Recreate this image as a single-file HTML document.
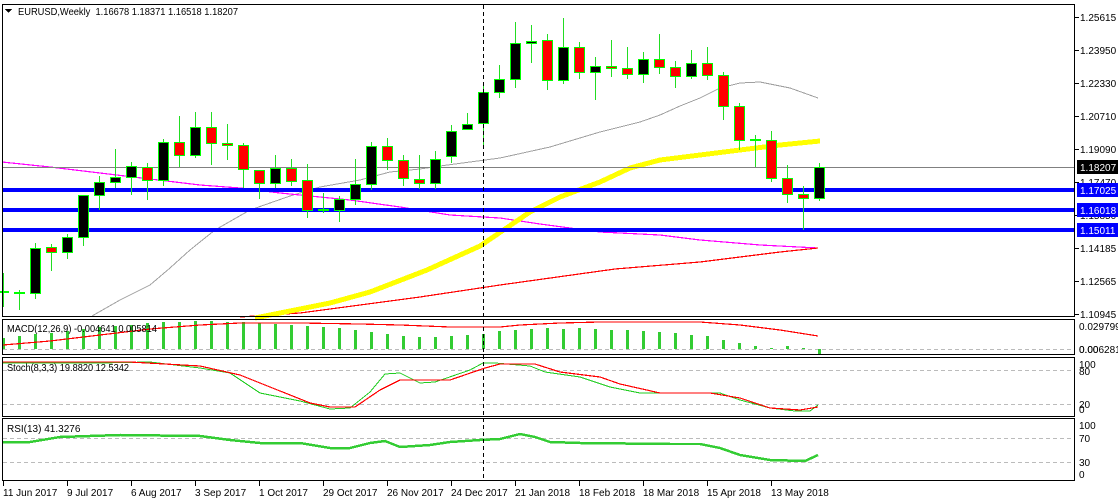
<!DOCTYPE html>
<html><head><meta charset="utf-8"><style>
html,body{margin:0;padding:0;background:#fff;width:1118px;height:502px;overflow:hidden}
svg{display:block}
text{font-family:"Liberation Sans",sans-serif;font-size:10px;fill:#000}
</style></head><body>
<svg id="s" width="1118" height="502" viewBox="0 0 1118 502" xmlns="http://www.w3.org/2000/svg" shape-rendering="crispEdges">
<rect width="1118" height="502" fill="#fff"/>
<g id="g"></g>
<g fill="none" stroke="#000" stroke-width="1">
<rect x="2.5" y="4.5" width="1072" height="312"/>
<rect x="2.5" y="319.5" width="1072" height="35"/>
<rect x="2.5" y="357.5" width="1072" height="59"/>
<rect x="2.5" y="418.5" width="1072" height="62"/>
</g>
<line x1="483.5" y1="5" x2="483.5" y2="481" stroke="#000" stroke-dasharray="4,3"/>
<path d="M5 9 L12 9 L8.5 13 Z" fill="#000"/>
<text x="18" y="15" textLength="220" lengthAdjust="spacingAndGlyphs">EURUSD,Weekly&#160; 1.16678 1.18371 1.16518 1.18207</text>
<text x="7" y="332" textLength="150" lengthAdjust="spacingAndGlyphs">MACD(12,26,9) -0.004641 0.005814</text>
<text x="7" y="371" textLength="122" lengthAdjust="spacingAndGlyphs">Stoch(8,3,3) 19.8820 12.5342</text>
<text x="7" y="432">RSI(13) 41.3276</text>
<g>
<text x="1080" y="21">1.25615</text>
<text x="1080" y="54">1.23950</text>
<text x="1080" y="87">1.22330</text>
<text x="1080" y="120">1.20710</text>
<text x="1080" y="153">1.19090</text>
<text x="1080" y="186">1.17470</text>
<text x="1080" y="219">1.15850</text>
<text x="1080" y="252">1.14185</text>
<text x="1080" y="285">1.12565</text>
<text x="1080" y="318">1.10945</text>
<rect x="1077" y="160" width="41" height="14" fill="#000"/>
<text x="1080" y="171" style="fill:#fff">1.18207</text>
<rect x="1077" y="183" width="41" height="14" fill="#0000ff"/>
<text x="1080" y="194" style="fill:#fff">1.17025</text>
<rect x="1077" y="203" width="41" height="14" fill="#0000ff"/>
<text x="1080" y="214" style="fill:#fff">1.16018</text>
<rect x="1077" y="223" width="41" height="14" fill="#0000ff"/>
<text x="1080" y="234" style="fill:#fff">1.15011</text>
<text x="1079" y="330">0.029799</text>
<text x="1079" y="353">0.006281</text>
<text x="1079" y="353">0.00</text>
<text x="1079" y="368">100</text>
<text x="1079" y="375">80</text>
<text x="1079" y="408">20</text>
<text x="1079" y="413">0</text>
<text x="1079" y="429">100</text>
<text x="1079" y="442">70</text>
<text x="1079" y="466">30</text>
<text x="1079" y="478">0</text>
</g>
<g>
<text x="3" y="496">11 Jun 2017</text>
<text x="67" y="496">9 Jul 2017</text>
<text x="131" y="496">6 Aug 2017</text>
<text x="195" y="496">3 Sep 2017</text>
<text x="259" y="496">1 Oct 2017</text>
<text x="323" y="496">29 Oct 2017</text>
<text x="387" y="496">26 Nov 2017</text>
<text x="451" y="496">24 Dec 2017</text>
<text x="515" y="496">21 Jan 2018</text>
<text x="579" y="496">18 Feb 2018</text>
<text x="643" y="496">18 Mar 2018</text>
<text x="707" y="496">15 Apr 2018</text>
<text x="771" y="496">13 May 2018</text>
</g>
</svg>
<script>
var NS="http://www.w3.org/2000/svg",g=document.getElementById("g");
function el(t,a){var e=document.createElementNS(NS,t);for(var k in a)e.setAttribute(k,a[k]);g.appendChild(e);return e;}
function pl(pts,c,w,extra){var a={points:pts.map(function(p){return p.join(",")}).join(" "),fill:"none",stroke:c,"stroke-width":w};for(var k in extra)a[k]=extra[k];el("polyline",a);}
for(var y of [17,50,83,116,149,182,215,248,281,314])el("line",{x1:1075,x2:1079,y1:y+.5,y2:y+.5,stroke:"#000"});
for(var i=0;i<13;i++)el("line",{x1:3.5+64*i,x2:3.5+64*i,y1:481,y2:486,stroke:"#000"});
for(var y of [349,370,404,438,462])el("line",{x1:3,x2:1074,y1:y+.5,y2:y+.5,stroke:"#bbb","stroke-dasharray":"4,3"});
pl([[92,316],[120,300],[150,285],[170,268],[190,250],[215,230],[250,210],[290,196],[320,187],[360,180],[390,172],[420,169],[440,166],[470,162],[500,158],[550,147],[600,132],[640,122],[660,115],[680,106],[700,98],[720,88],[740,83],[760,82],[790,88],[818,98]],"#a0a0a0",1);
pl([[2,162],[50,167],[100,173],[150,179],[200,185],[240,188],[280,193],[350,200],[400,207],[450,215],[500,218],[540,224],[600,232],[660,235],[700,240],[760,245],[818,248]],"#ff00ff",1.2);
pl([[240,317],[300,313],[360,305],[420,297],[500,285],[615,269],[700,262],[780,252],[818,248]],"#ff0000",1.2);
pl([[255,318],[300,309],[330,303],[370,292],[427,270],[480,246],[530,212],[560,197],[600,182],[630,168],[660,160],[700,155],[740,150],[780,145],[820,141]],"#ffff00",5);
el("line",{x1:3,x2:1074,y1:167.5,y2:167.5,stroke:"#808080"});
for(var y of [190,210,230])el("rect",{x:3,y:y-2,width:1071,height:4,fill:"#0000ff"});
var C=[[292,292,273,307,2],[293,293,290,310,2],[248,293,243,299,0],[247,252,244,271,1],[237,252,234,259,0],[195,237,195,246,0],[182,195,176,210,0],[177,182,149,188,0],[166,177,162,195,0],[167,180,163,200,1],[142,180,139,186,0],[142,155,116,167,1],[127,155,112,158,0],[127,143,112,165,1],[143,145,124,160,1],[145,169,143,188,1],[170,183,170,199,1],[168,183,155,188,0],[168,181,159,186,1],[180,210,164,218,1],[210,210,193,213,2],[199,210,196,222,0],[184,199,159,205,0],[146,184,142,190,0],[146,160,138,170,1],[160,178,155,186,1],[179,183,155,189,1],[159,183,151,189,0],[131,156,125,163,0],[124,129,113,130,0],[92,123,86,149,0],[79,92,65,98,0],[43,79,22,88,0],[41,43,25,63,0],[40,80,34,90,1],[47,80,18,84,0],[47,72,42,79,1],[66,72,57,100,0],[66,68,40,77,1],[68,74,47,79,1],[59,74,52,83,0],[59,67,34,74,1],[67,76,61,88,1],[63,76,50,79,0],[63,75,47,80,1],[75,106,72,120,1],[106,140,103,150,1],[140,140,135,167,2],[140,178,131,182,1],[178,194,165,203,1],[194,198,186,230,1],[167,198,163,201,0]];
C.forEach(function(c,i){var x=3+16*i;
el("line",{x1:x+.5,x2:x+.5,y1:c[2],y2:c[3],stroke:"#22dd22"});
if(c[4]==2){el("rect",{x:x-5,y:c[0]-1,width:11,height:2,fill:"#00ff00"});}
else el("rect",{x:x-4.5,y:c[0]+.5,width:10,height:Math.max(c[1]-c[0],2),fill:c[4]?"#ff0000":"#000",stroke:"#00ff00","stroke-width":1.2});
});
var H=[338,336,334,333,331,329,327,326,325,323,322,322,321,321,322,322,323,324,325,326,327,328,330,332,334,336,337,337,336,335,334,331,330,329,328,329,328,329,330,330,331,332,333,335,336,340,343,346,348,346,348,349];
H.forEach(function(t,i){var x=3+16*i;if(i==51){el("rect",{x:x-1,y:349,width:3,height:5,fill:"#33cc33"});return;}
el("rect",{x:x-1,y:t,width:3,height:Math.max(349-t,1),fill:"#33cc33"});});
pl([[3,345],[50,341],[100,335],[150,329],[200,325],[240,323],[300,323],[360,324],[400,325],[450,327],[500,327],[520,325],[560,323],[600,322],[700,322],[740,325],[780,330],[818,336]],"#ff0000",1.2);
pl([[3,363],[100,363],[150,362],[200,368],[230,373],[260,393],[300,401],[330,409],[350,408],[370,392],[385,374],[400,373],[420,383],[435,382],[470,370],[483,363],[495,363],[530,366],[545,372],[580,377],[610,387],[640,393],[720,393],[740,400],[770,408],[795,411],[810,411],[818,405]],"#22cc22",1);
pl([[3,362],[130,362],[200,366],[240,375],[280,391],[310,403],[330,407],[355,407],[380,390],[400,380],[450,380],[485,368],[500,364],[535,364],[560,372],[600,377],[620,384],[660,393],[710,393],[740,398],[770,408],[800,410],[818,407]],"#ff0000",1.2);
pl([[3,442],[30,442],[60,437],[120,435],[200,436],[230,440],[260,443],[300,443],[330,448],[350,448],[370,443],[385,441],[400,447],[430,445],[450,442],[480,440],[500,439],[520,434],[535,437],[550,442],[580,443],[670,444],[700,444],[720,448],[740,455],[770,460],[805,461],[818,455]],"#33cc33",2.5);
</script>
</body></html>
